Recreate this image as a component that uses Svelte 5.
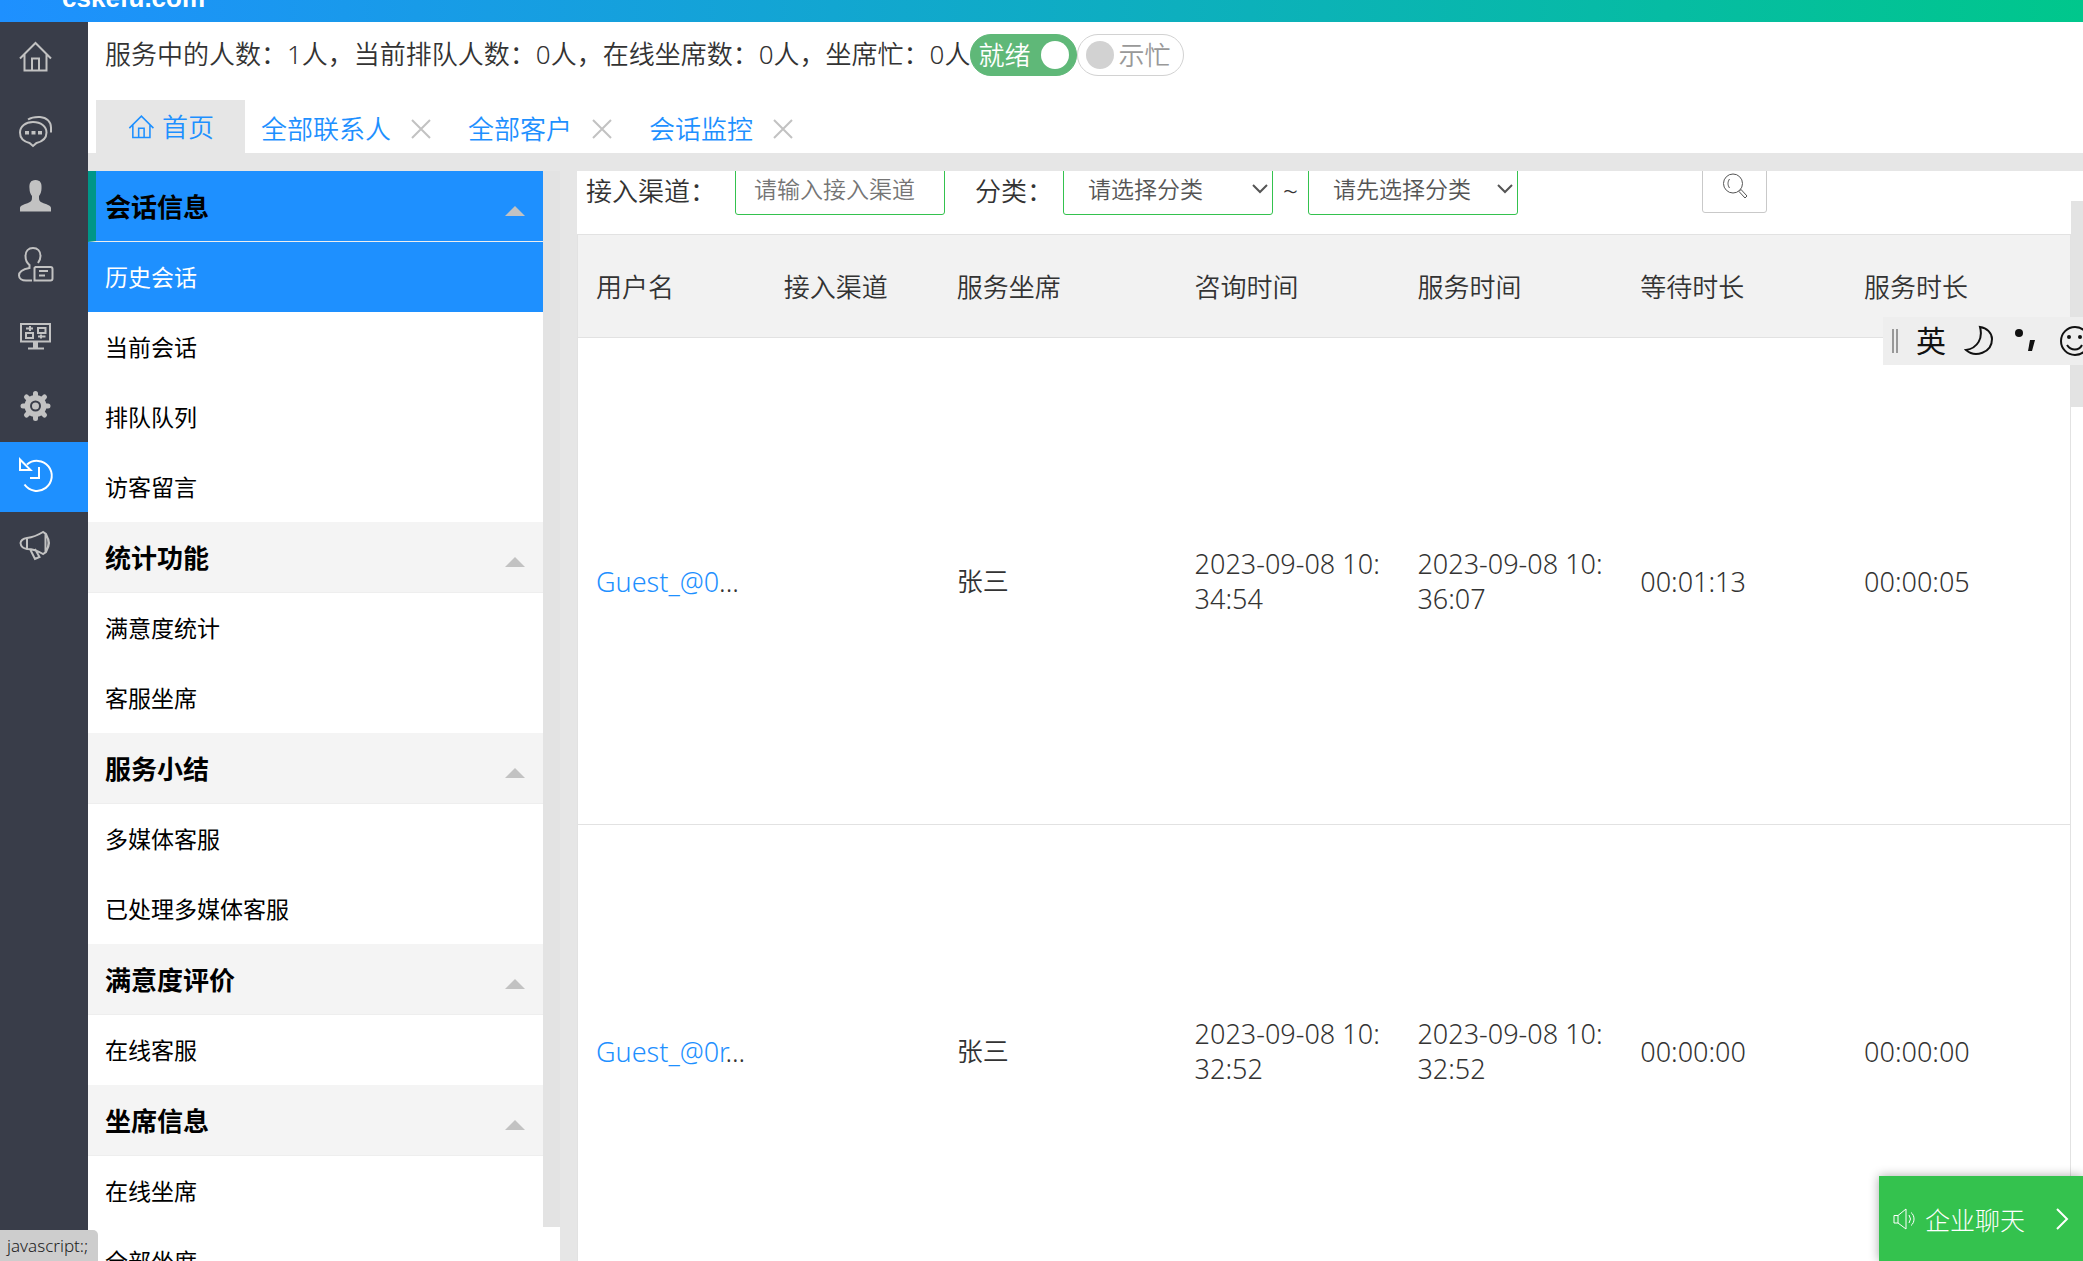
<script>
  let ready = $state(true);
  let busy = $state(false);
  let channel = $state("");
  let category = $state("");
  let subCategory = $state("");

  const nav = ["home", "chat", "user", "contact", "screen", "gear", "history", "horn"];

  const tabs = ["全部联系人", "全部客户", "会话监控"];

  const groups = [
    { title: "会话信息", items: ["历史会话", "当前会话", "排队队列", "访客留言"] },
    { title: "统计功能", items: ["满意度统计", "客服坐席"] },
    { title: "服务小结", items: ["多媒体客服", "已处理多媒体客服"] },
    { title: "满意度评价", items: ["在线客服"] },
    { title: "坐席信息", items: ["在线坐席", "全部坐席"] },
  ];

  const columns = [
    { name: "用户名", width: 188 },
    { name: "接入渠道", width: 173 },
    { name: "服务坐席", width: 238 },
    { name: "咨询时间", width: 223 },
    { name: "服务时间", width: 223 },
    { name: "等待时长", width: 224 },
    { name: "服务时长", width: 224 },
  ];
  const total = columns.reduce((sum, c) => sum + c.width, 0);

  const rows = [
    {
      guest: "Guest_@0",
      agent: "张三",
      asked: "2023-09-08 10:34:54",
      served: "2023-09-08 10:36:07",
      wait: "00:01:13",
      duration: "00:00:05",
    },
    {
      guest: "Guest_@0r",
      agent: "张三",
      asked: "2023-09-08 10:32:52",
      served: "2023-09-08 10:32:52",
      wait: "00:00:00",
      duration: "00:00:00",
    },
  ];
</script>

{#snippet icon(name)}
  <svg class="icon" viewBox="0 0 36 36" aria-hidden="true">
    {#if name === "home"}
      <path d="M3 19.500 18.500 4 34 19.500M7.500 15.500V31.500h22V15.500M15 31.500V19.500h7v12" />
    {:else if name === "chat"}
      <path d="M11 10.500c4-2.500 8-2.700 12-2.500 7 .5 11 5 11 10.500v5" />
      <path d="M16 13c8 0 13.500 4.500 13.500 10.500 0 5.500-4 9-10 10.500L16 37l-3.500-3C6.500 32.500 3 29 3 23.500 3 17.500 8.500 13 16 13z" />
      <path class="solid" d="M8 22h4v3.500H8zM14.500 22h4v3.500h-4zM21 22h4v3.500h-4z" />
    {:else if name === "user"}
      <path
        class="solid"
        d="M18.500 1c5 0 6.500 3.500 6 8.500 0 3.500-1 5.500-2.500 7.500 0 4 0 5 3 6.500 4 2 9 2.500 9 5.500v3.500H3V29c0-3 5-3.500 9-5.500 3-1.500 3-2.500 3-6.500-1.500-2-2.500-4-2.500-7.500-.5-5 1-8.500 6-8.500z"
      />
    {:else if name === "contact"}
      <path d="M21 14c1.500-2 2.500-4 2.500-7 0-5-3-8-7.500-8S8.500 2 8.500 7c0 4 1.500 7 4 9v3C7 20 2 22 2 26.500c0 3 3 5 7 5h6" />
      <path d="M18.500 18h15q2 0 2 2v9.500q0 2-2 2h-16V19zM22 22h9M22 26.500h6" />
    {:else if name === "screen"}
      <path d="M4 5h29v17.500H4zM11 29.500h16" />
      <path class="solid" d="M16 23h5v6h-5z" />
      <path d="M9 9.500h7M13 7v5M9 14h7v5H9zM21 9h7.500v5H21zM21 17.500h7.500M24 15.500v4" />
    {:else if name === "gear"}
      <g stroke-width="5" stroke-linecap="round">
        <path d="M18.500 4.500v25M6 17h25M9.500 8l18 18M27.500 8l-18 18" />
      </g>
      <circle class="solid" cx="18.500" cy="17" r="11" />
      <circle class="cut" cx="18.500" cy="17" r="4.500" />
    {:else if name === "history"}
      <path d="M10 5.500A15 15 0 1 1 7.500 25.500M3 .5v10.500h10.500zM22 8v11h-9" />
    {:else if name === "horn"}
      <path d="M10 9q8-1 16-6l3 2q5 9 0 18l-3 2q-8-5-16-5-6-1-6.500-6Q4 10 10 9zM10 9v11M28.500 4.500v19M29 6q6 8 0 16M13 20l5 10 4.500-2-4.500-8" />
    {/if}
  </svg>
{/snippet}

<div class="page">
  <header class="brand"><a href="/">cskefu.com</a></header>

  <div class="shell">
    <nav class="rail" aria-label="主导航">
      {#each nav as name}
        <a href="#{name}" class:active={name === "history"} aria-label={name}>
          {@render icon(name)}
        </a>
      {/each}
    </nav>

    <div class="workspace">
      <div class="status">
        <span>服务中的人数：1人，当前排队人数：0人，在线坐席数：0人，坐席忙：0人</span>
        <button class="switch" class:on={ready} role="switch" aria-checked={ready} onclick={() => (ready = !ready)}>
          <span>就绪</span><i></i>
        </button>
        <button class="switch" class:on={busy} role="switch" aria-checked={busy} onclick={() => (busy = !busy)}>
          <span>示忙</span><i></i>
        </button>
      </div>

      <div class="tabs">
        <a class="tab home" href="#home">{@render icon("home")}首页</a>
        {#each tabs as tab}
          <div class="tab">
            <a href="#{tab}">{tab}</a>
            <button aria-label="关闭{tab}">
              <svg viewBox="0 0 20 20"><path d="M1 1l18 18M19 1 1 19" /></svg>
            </button>
          </div>
        {/each}
      </div>

      <div class="body">
        <aside>
          {#each groups as group, g}
            <section>
              <h2 class:current={g === 0}>
                {group.title}
                <svg viewBox="0 0 20 10"><path d="M10 0l10 10H0z" /></svg>
              </h2>
              {#each group.items as item, i}
                <a href="#{item}" class:current={g === 0 && i === 0}>{item}</a>
              {/each}
            </section>
          {/each}
        </aside>
        <div class="menu-scroll"></div>

        <main>
          <form class="filters">
            <label for="channel">接入渠道：</label>
            <input id="channel" placeholder="请输入接入渠道" bind:value={channel} />
            <label class="category" for="category">分类：</label>
            <div class="select">
              <select id="category" bind:value={category}>
                <option value="">请选择分类</option>
              </select>
              <svg viewBox="0 0 16 10"><path d="M1 1l7 7 7-7" /></svg>
            </div>
            <span class="tilde">~</span>
            <div class="select">
              <select aria-label="子分类" bind:value={subCategory}>
                <option value="">请先选择分类</option>
              </select>
              <svg viewBox="0 0 16 10"><path d="M1 1l7 7 7-7" /></svg>
            </div>
            <button class="search" type="button" aria-label="搜索">
              <svg viewBox="0 0 26 26">
                <circle cx="11" cy="10.500" r="9.500" />
                <path d="M7.500 6c-2 3-2 6 0 9M17 18.500l2-2 6 6.500-2 2z" />
              </svg>
            </button>
          </form>

          <div class="records">
            <table>
              <colgroup>
                {#each columns as c}
                  <col style="width: {(c.width / total) * 100}%" />
                {/each}
              </colgroup>
              <thead>
                <tr>
                  {#each columns as c}
                    <th>{c.name}</th>
                  {/each}
                </tr>
              </thead>
              <tbody>
                {#each rows as r}
                  <tr>
                    <td><a href="#guest">{r.guest}</a>...</td>
                    <td></td>
                    <td class="agent">{r.agent}</td>
                    <td>{r.asked}</td>
                    <td>{r.served}</td>
                    <td>{r.wait}</td>
                    <td>{r.duration}</td>
                  </tr>
                {/each}
              </tbody>
            </table>
          </div>
          <div class="thumb"></div>
        </main>
      </div>
    </div>
  </div>

  <div class="ime">
    <span class="grip"></span>
    <span class="lang">英</span>
    <svg viewBox="0 0 30 32"><path d="M16 2c3 11-2 21-14 23 9 8 26 3 26-11 0-6-5-11-12-12z" /></svg>
    <svg viewBox="0 0 30 32"><circle class="ink" cx="7" cy="8" r="4" /><path class="ink" d="M18 15h5l-3 11h-4z" /></svg>
    <svg viewBox="0 0 30 32"><circle cx="15" cy="16" r="14" /><circle class="ink" cx="9" cy="12" r="2" /><circle class="ink" cx="20" cy="12" r="2" /><path d="M7 20c4 6 12 6 15 0" /></svg>
  </div>

  <button class="talk">
    <svg class="sound" viewBox="0 0 22 22"><path d="M1 7.500h4V15H1zM5 7.500 13 1v20l-8-6M16 7q3 4 0 8M18 4.500c4 3 4 10 0 13" /></svg>
    <span>企业聊天</span>
    <svg class="next" viewBox="0 0 14 24"><path d="M2 2l10 10L2 22" /></svg>
  </button>

  <div class="hint">javascript:;</div>
</div>

<style>
  :global(body) {
    color: #333;
    font-family: "Noto Sans", "Noto Sans CJK SC", sans-serif;
    font-size: 26px;
    font-weight: 350;
  }
  .page {
    position: relative;
    display: flex;
    flex-direction: column;
    height: 100vh;
    overflow: hidden;
    background: #fff;
  }
  a {
    color: #1e90ff;
    text-decoration: none;
  }
  button,
  input,
  select {
    font: inherit;
  }
  button {
    padding: 0;
    border: 0;
    background: none;
    cursor: pointer;
  }
  svg {
    flex: none;
    fill: none;
    stroke: currentColor;
    stroke-width: 2;
  }
  .icon {
    width: 36px;
    height: 36px;
    overflow: visible;
  }
  .icon .solid {
    fill: currentColor;
    stroke: none;
  }
  .icon .cut {
    stroke: #393d49;
  }

  .brand {
    display: flex;
    align-items: flex-end;
    flex: none;
    height: 22px;
    padding-left: 62px;
    overflow: hidden;
    background: linear-gradient(90deg, #1e90ff, #00c78c);
  }
  .brand a {
    margin-bottom: 9px;
    color: #fff;
    font: bold 26px/30px "Liberation Sans", sans-serif;
  }
  .shell {
    display: flex;
    flex: 1;
    min-height: 0;
  }

  .rail {
    flex: none;
    width: 88px;
    background: #393d49;
  }
  .rail a {
    display: flex;
    align-items: center;
    height: 70px;
    padding-left: 17px;
    color: #c2c2c2;
  }
  .rail a.active {
    background: #1e90ff;
    color: #fff;
  }

  .workspace {
    display: flex;
    flex: 1;
    flex-direction: column;
    min-width: 0;
  }
  .status {
    display: flex;
    align-items: center;
    height: 62px;
    padding: 0 0 16px 17px;
    white-space: nowrap;
  }
  .switch {
    display: flex;
    flex-direction: row-reverse;
    align-items: center;
    justify-content: space-between;
    box-sizing: border-box;
    width: 107px;
    height: 42px;
    margin-top: 4px;
    padding: 0 13px 0 8px;
    border: 1px solid #d2d2d2;
    border-radius: 21px;
    color: #999;
    line-height: 38px;
  }
  .switch i {
    width: 28px;
    height: 28px;
    border-radius: 50%;
    background: #d2d2d2;
  }
  .switch.on {
    flex-direction: row;
    padding: 0 7px;
    border-color: #5fb878;
    background: #5fb878;
    color: #fff;
  }
  .switch.on i {
    background: #fff;
  }

  .tabs {
    display: flex;
    flex: none;
    height: 53px;
    padding-left: 8px;
    border-bottom: 18px solid #e6e6e6;
  }
  .tab {
    display: flex;
    align-items: center;
    gap: 20px;
    padding: 4px 21px 0 16px;
    line-height: 40px;
  }
  .tab svg {
    display: block;
    width: 20px;
    height: 20px;
    color: #c2c2c2;
  }
  .tab.home {
    gap: 7px;
    padding: 0 31px;
    background: #e6e6e6;
  }
  .tab.home .icon {
    width: 28px;
    height: 28px;
    color: #1e90ff;
  }

  .body {
    display: flex;
    flex: 1;
    min-height: 0;
    background: #e6e6e6;
  }
  aside {
    flex: none;
    width: 455px;
    overflow: hidden;
    background: #fff;
  }
  h2 {
    display: flex;
    align-items: center;
    justify-content: space-between;
    box-sizing: border-box;
    height: 71px;
    margin: 0;
    padding: 0 18px 0 17px;
    border-bottom: 1px solid #eee;
    background: #f4f4f4;
    color: #000;
    font-size: 26px;
    font-weight: 700;
  }
  h2 svg {
    width: 20px;
    height: 10px;
    margin-top: 10px;
    fill: #c2c2c2;
    stroke: none;
  }
  h2.current {
    padding-left: 9px;
    border-left: 8px solid #009688;
    background: #1e90ff;
  }
  aside a {
    display: block;
    height: 70px;
    padding-left: 17px;
    color: #000;
    font-size: 23px;
    font-weight: 400;
    line-height: 70px;
  }
  aside a.current {
    background: #1e90ff;
    color: #fff;
  }
  .menu-scroll {
    flex: none;
    width: 17px;
    margin-right: 17px;
    border-bottom: 34px solid #fff;
    background: #e3e3e3;
  }

  main {
    position: relative;
    display: flex;
    flex: 1;
    flex-direction: column;
    min-width: 0;
    overflow: hidden;
    background: #fff;
  }
  .filters {
    display: flex;
    align-items: flex-end;
    flex: none;
    height: 44px;
    padding: 0 0 19px 9px;
    white-space: nowrap;
  }
  label,
  .tilde {
    line-height: 48px;
  }
  label {
    width: 149px;
  }
  label.category {
    width: 88px;
    margin-left: 30px;
  }
  input,
  select {
    box-sizing: border-box;
    width: 210px;
    height: 50px;
    border: 1px solid #34c24e;
    border-radius: 3px;
    background: #fff;
    color: #555;
    font-size: 23px;
  }
  input {
    padding: 0 18px 2px;
  }
  input::placeholder {
    color: #757575;
  }
  select {
    display: block;
    padding: 0 24px 2px;
    appearance: none;
  }
  .select {
    position: relative;
  }
  .select svg {
    position: absolute;
    right: 5px;
    bottom: 21px;
    width: 16px;
    height: 10px;
    color: #555;
  }
  .tilde {
    width: 35px;
    text-align: center;
  }
  .search {
    display: grid;
    place-items: center;
    box-sizing: border-box;
    width: 65px;
    height: 54px;
    margin: 0 0 2px 184px;
    border: 1px solid #c9c9c9;
    border-radius: 3px;
    color: #555;
  }
  .search svg {
    width: 26px;
    height: 26px;
    stroke-width: 1;
  }

  .records {
    margin-right: 12px;
    border: 1px solid #e2e2e2;
  }
  table {
    width: 100%;
    border-collapse: collapse;
    table-layout: fixed;
  }
  th,
  td {
    padding: 0 17px 0 18px;
    border-bottom: 1px solid #e2e2e2;
    text-align: left;
  }
  th {
    height: 102px;
    background: #f2f2f2;
    font-weight: inherit;
  }
  td {
    height: 486px;
    font-size: 27px;
    line-height: 35px;
    word-break: break-all;
  }
  td.agent {
    font-size: 26px;
  }
  tr:nth-child(2) td {
    height: 452px;
  }
  .thumb {
    position: absolute;
    top: 30px;
    right: 0;
    width: 12px;
    height: 206px;
    background: #e3e3e3;
  }

  .ime {
    position: absolute;
    top: 317px;
    right: 0;
    display: flex;
    align-items: center;
    gap: 18px;
    box-sizing: border-box;
    width: 200px;
    height: 48px;
    padding-left: 9px;
    overflow: hidden;
    background: #eee;
    color: #111;
  }
  .ime svg {
    width: 30px;
    height: 32px;
  }
  .ime .ink {
    fill: currentColor;
    stroke: none;
  }
  .grip {
    flex: none;
    box-sizing: border-box;
    width: 6px;
    height: 24px;
    border: solid #999;
    border-width: 0 2px;
  }
  .lang {
    font-size: 30px;
    font-weight: 400;
    line-height: 48px;
  }

  .talk {
    position: absolute;
    right: 0;
    bottom: 0;
    display: flex;
    align-items: center;
    width: 204px;
    height: 85px;
    padding: 0 14px;
    background: #34c24e;
    box-shadow: 0 0 10px #0005;
    color: #fff;
  }
  .talk span {
    margin: 0 auto 0 10px;
    font-size: 25px;
    font-weight: 300;
  }
  .sound {
    width: 22px;
    height: 22px;
    stroke-width: 1;
  }
  .next {
    width: 14px;
    height: 24px;
  }

  .hint {
    position: absolute;
    bottom: 0;
    left: 0;
    padding: 0 10px 0 7px;
    border-radius: 0 5px 0 0;
    background: #cdcdcd;
    color: #222;
    font-size: 17px;
    line-height: 31px;
  }
</style>
